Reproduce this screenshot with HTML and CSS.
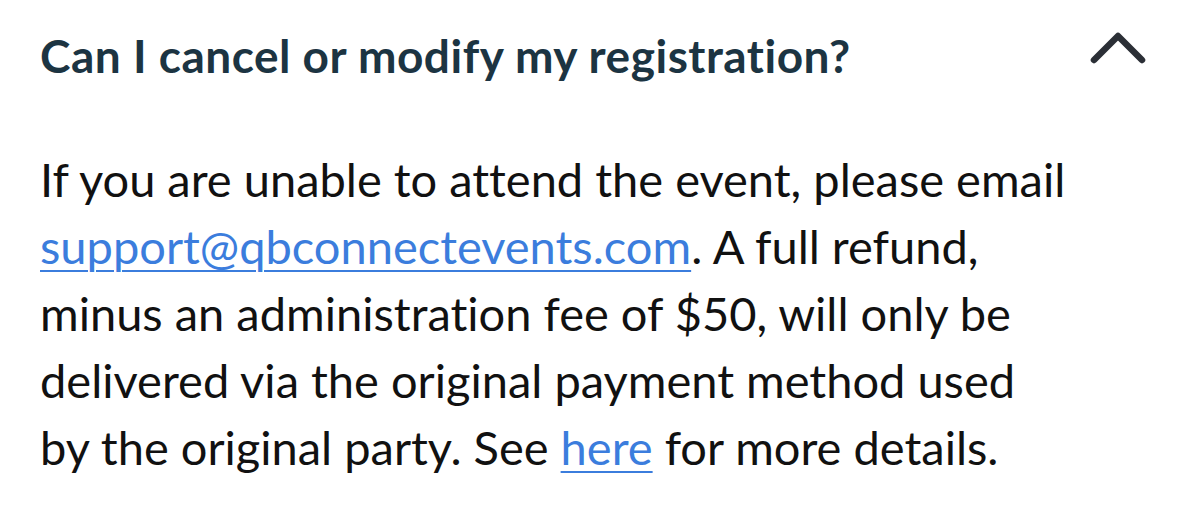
FILE: index.html
```html
<!DOCTYPE html>
<html lang="en">
<head>
<meta charset="utf-8">
<title>FAQ</title>
<link rel="stylesheet" href="styles.css">
</head>
<body>
<section class="faq">
  <div class="faq-head">
    <h2 class="faq-title">Can I cancel or modify my registration?</h2>
    <svg class="chevron" width="60" height="40" viewBox="0 0 60 40" aria-hidden="true">
      <path d="M6 32 L30 8 L54 32" fill="none" stroke="#2b2f36" stroke-width="6.5" stroke-linecap="round" stroke-linejoin="round"/>
    </svg>
  </div>
  <p class="faq-body">If you are unable to attend the event, please email<br><a href="#">support@qbconnectevents.com</a>. A full refund,<br>minus an administration fee of $50, will only be<br>delivered via the original payment method used<br>by the original party. See <a href="#">here</a> for more details.</p>
</section>
</body>
</html>
```
FILE: styles.css
```css
html, body {
  margin: 0;
  padding: 0;
  background: #ffffff;
}
.faq {
  width: 1200px;
  height: 517px;
  box-sizing: border-box;
  padding: 0 52px 0 40px;
  font-family: Lato, "Open Sans", sans-serif;
  font-variant-ligatures: none;
}
.faq-head {
  display: flex;
  align-items: center;
  justify-content: space-between;
  height: 112px;
}
.faq-title {
  margin: 0;
  font-size: 46px;
  font-weight: 700;
  letter-spacing: 0.5px;
  color: #1c3442;
  line-height: 56px;
}
.chevron {
  display: block;
  margin-top: -16px;
}
.faq-body {
  margin: 34px 0 0 0;
  font-size: 47px;
  line-height: 67px;
  color: #111111;
  font-weight: 400;
}
.faq-body a {
  color: #3b7ddd;
  text-decoration: underline;
  text-decoration-thickness: 2px;
  text-underline-offset: 6px;
}
```
